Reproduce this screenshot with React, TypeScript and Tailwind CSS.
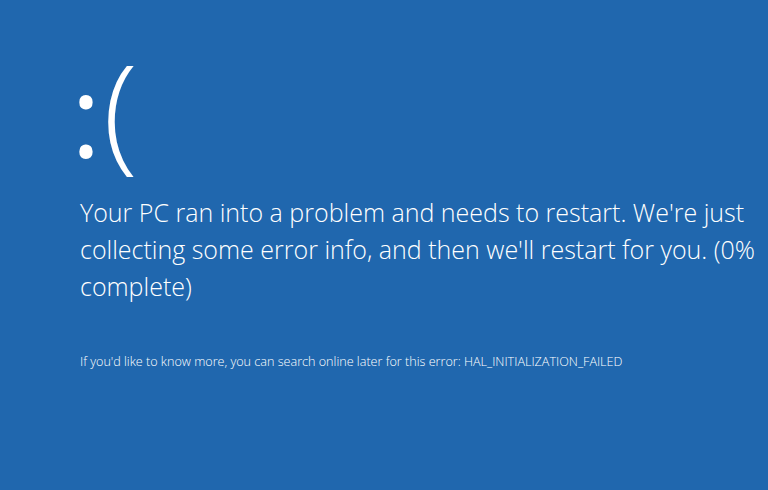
import React from 'react';

const App: React.FC = () => {
  return (
    <div
      className="w-[768px] h-[490px] bg-[#2067ae] text-white overflow-hidden pl-[80px] pt-[33px]"
      style={{ fontFamily: '"Open Sans", "Noto Sans", sans-serif' }}
    >
      <div className="flex items-baseline h-[150px] leading-[150px] -ml-[9px]">
        <span className="text-[114px] font-normal">:</span>
        <span className="text-[128px] font-light ml-[2px]">(</span>
      </div>
      <p className="mt-[11px] w-[680px] text-[25px] leading-[37px] font-light">
        Your PC ran into a problem and needs to restart. We're just collecting some error info, and then we'll restart for you. (0% complete)
      </p>
      <p className="mt-[48px] text-[12.6px] leading-[17px] font-light">
        If you'd like to know more, you can search online later for this error: HAL_INITIALIZATION_FAILED
      </p>
    </div>
  );
};

export default App;
